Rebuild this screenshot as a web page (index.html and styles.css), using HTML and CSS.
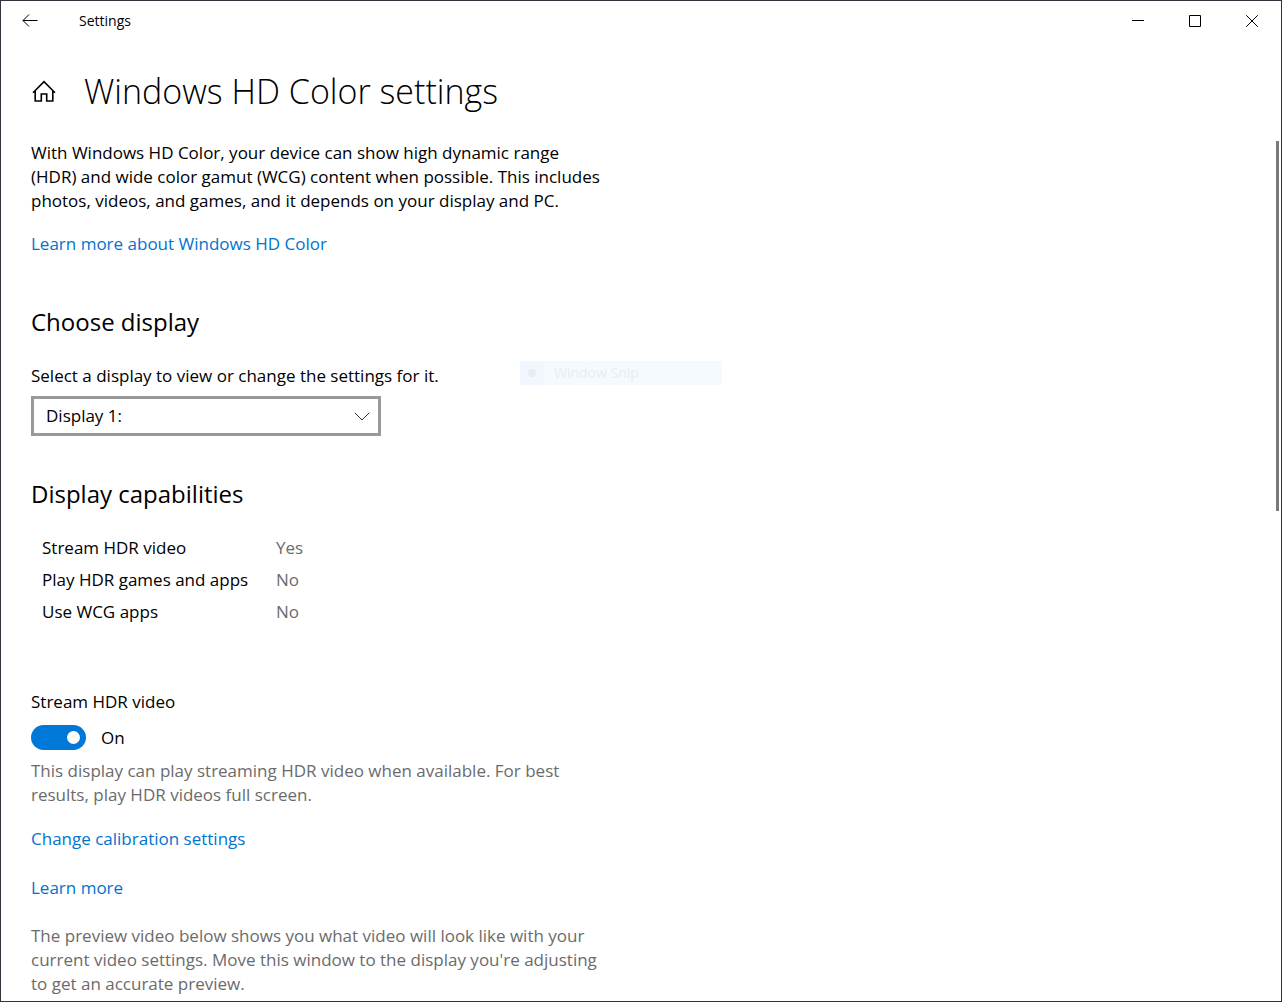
FILE: index.html
```html
<!DOCTYPE html>
<html lang="en">
<head>
  <meta charset="UTF-8">
  <meta name="viewport" content="width=device-width, initial-scale=1.0">
  <title>Settings</title>
  <link rel="stylesheet" href="styles.css">
</head>
<body>

  <div class="window">
    <!-- Title bar -->
    <header class="titlebar">
      <button class="back" aria-label="Back">
        <svg width="16" height="14" viewBox="0 0 16 14"><path d="M15.5 6.5H1M7 .5L1 6.5L7 12.5"/></svg>
      </button>
      <span class="app-name">Settings</span>
      <div class="caption-buttons">
        <button aria-label="Minimize">
          <svg width="12" height="12" viewBox="0 0 12 12"><path d="M0 5.5H12"/></svg>
        </button>
        <button aria-label="Maximize">
          <svg width="12" height="12" viewBox="0 0 12 12"><path d="M.5 .5H11.5V11.5H.5Z"/></svg>
        </button>
        <button aria-label="Close">
          <svg width="12" height="12" viewBox="0 0 12 12"><path d="M.2 .2L11.8 11.8M11.8 .2L.2 11.8"/></svg>
        </button>
      </div>
    </header>

    <div class="page-header">
      <button class="home" aria-label="Home">
        <svg width="24" height="22" viewBox="0 0 24 22"><path d="M1 12.7L12 1.7L23 12.7M3.2 10.5V21H9.3V14H14.7V21H20.8V10.5"/></svg>
      </button>
      <h1>Windows HD Color settings</h1>
    </div>

    <div class="scroll-area">
      <main class="content">
        <p class="intro">With Windows HD Color, your device can show high dynamic range (HDR) and wide color gamut (WCG) content when possible. This includes photos, videos, and games, and it depends on your display and PC.</p>
        <a class="intro-link" href="#">Learn more about Windows HD Color</a>

        <h2 class="choose">Choose display</h2>
        <label for="display">Select a display to view or change the settings for it.</label>
        <div class="select-box">
          <select id="display">
            <option>Display 1:</option>
          </select>
          <svg class="chevron" width="16" height="9" viewBox="0 0 16 9"><path d="M.8 .8L8 8L15.2 .8"/></svg>
        </div>

        <h2 class="capabilities-title">Display capabilities</h2>
        <table class="capabilities">
          <tr><th scope="row">Stream HDR video</th><td>Yes</td></tr>
          <tr><th scope="row">Play HDR games and apps</th><td>No</td></tr>
          <tr><th scope="row">Use WCG apps</th><td>No</td></tr>
        </table>

        <label for="stream">Stream HDR video</label>
        <div class="toggle-row">
          <input type="checkbox" role="switch" id="stream" checked>
          <span>On</span>
        </div>
        <p class="note">This display can play streaming HDR video when available. For best results, play HDR videos full screen.</p>
        <a class="calibration" href="#">Change calibration settings</a>
        <a class="learn-more" href="#">Learn more</a>
        <p class="note">The preview video below shows you what video will look like with your current video settings. Move this window to the display you're adjusting to get an accurate preview.</p>
      </main>
      <div class="scroll-thumb"></div>
    </div>

    <!-- Fading snip menu item -->
    <div class="snip-menu">
      <span class="snip-dot"></span>
      <span>Window Snip</span>
    </div>
  </div>

</body>
</html>
```

FILE: styles.css
```css
* {
  box-sizing: border-box;
}

body {
  margin: 0;
  font-family: "Open Sans", "Noto Sans", sans-serif;
  font-size: 17px;
  line-height: 24px;
  color: #000;
  background-color: #fff;
}

button {
  display: flex;
  align-items: center;
  justify-content: center;
  padding: 0;
  border: none;
  background: none;
}

svg {
  fill: none;
  stroke: #000;
}

h1, h2, p {
  margin: 0;
  font-weight: 400;
}

a {
  color: #0073cf;
  text-decoration: none;
}

.window {
  position: relative;
  display: flex;
  flex-direction: column;
  height: 100vh;
  border: 1px solid #35323e;
  overflow: hidden;
}

.titlebar {
  display: flex;
  align-items: center;
  flex: none;
  height: 40px;
}

.back {
  width: 58px;
  height: 40px;
}

.app-name {
  margin-left: 20px;
  font-size: 14px;
}

.caption-buttons {
  display: flex;
  margin-left: auto;
  padding-right: 1px;
}

.caption-buttons button {
  width: 57px;
  height: 40px;
}

.page-header {
  display: flex;
  align-items: center;
  flex: none;
  height: 100px;
  padding-left: 31px;
}

.home svg {
  stroke-width: 1.6;
}

h1 {
  margin-left: 28px;
  font-size: 34px;
  font-weight: 300;
  line-height: 48px;
}

.scroll-area {
  position: relative;
  flex: 1;
  min-height: 0;
  overflow: hidden;
}

.content {
  display: flex;
  flex-direction: column;
  align-items: flex-start;
  max-width: 600px;
  padding-left: 30px;
}

.scroll-thumb {
  position: absolute;
  top: 0;
  right: 2px;
  width: 3px;
  height: 43%;
  background-color: #7a7a7a;
}

h2 {
  font-size: 24px;
  line-height: 32px;
}

.intro-link {
  margin-top: 19px;
}

.choose {
  margin: 50px 0 26px;
}

.select-box {
  position: relative;
  width: 350px;
  margin-top: 8px;
}

select {
  display: block;
  width: 100%;
  height: 40px;
  padding: 0 40px 0 12px;
  border: 3px solid #999;
  border-radius: 0;
  background-color: #fff;
  color: #000;
  font: inherit;
  appearance: none;
}

.chevron {
  position: absolute;
  top: 16px;
  right: 11px;
  stroke: #333;
  pointer-events: none;
}

.capabilities-title {
  margin: 42px 0 22px;
}

.capabilities {
  margin: 0 0 62px 11px;
  border-collapse: collapse;
}

.capabilities th, .capabilities td {
  height: 32px;
  padding: 0;
  text-align: left;
  font-weight: 400;
}

.capabilities th {
  width: 234px;
}

.capabilities td, .note {
  color: #6b6b6b;
}

.toggle-row {
  display: flex;
  align-items: center;
  gap: 15px;
  margin: 11px 0 9px;
}

.toggle-row input {
  display: flex;
  align-items: center;
  justify-content: flex-end;
  width: 55px;
  height: 25px;
  margin: 0;
  padding-right: 6px;
  border-radius: 13px;
  background-color: #0078d7;
  appearance: none;
}

.toggle-row input::before {
  content: "";
  width: 13px;
  height: 13px;
  border-radius: 50%;
  background-color: #fff;
}

.calibration {
  margin-top: 20px;
}

.learn-more {
  margin: 25px 0 24px;
}

.snip-menu {
  position: absolute;
  top: 360px;
  left: 519px;
  display: flex;
  align-items: center;
  width: 202px;
  height: 24px;
  background-color: #f5faff;
  color: #e8edf0;
  font-size: 14px;
}

.snip-dot {
  display: flex;
  align-items: center;
  justify-content: center;
  width: 24px;
  height: 24px;
  margin-right: 10px;
  background-color: #f0f7ff;
}

.snip-dot::before {
  content: "";
  width: 8px;
  height: 8px;
  border-radius: 50%;
  background-color: #e9ebed;
}
```
